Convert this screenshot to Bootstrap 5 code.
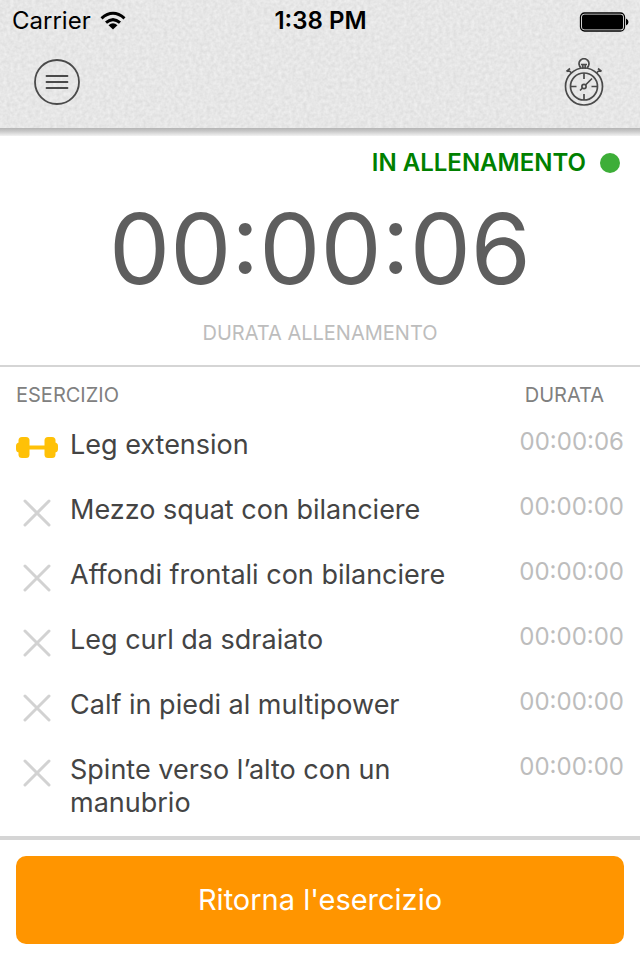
<!DOCTYPE html>
<html lang="it">
<head>
<meta charset="utf-8">
<meta name="viewport" content="width=device-width, initial-scale=1">
<title>Allenamento</title>
<link href="https://cdn.jsdelivr.net/npm/bootstrap@5.3.0/dist/css/bootstrap.min.css" rel="stylesheet">
<style>
  body { font-family: Inter, "Noto Sans", sans-serif; color: #444; background: #fff; }
  .app-header { background: #e6e6e6; padding-bottom: 20px; }
  .weave { z-index: 0; }
  .header-row { z-index: 1; }
  .header-shadow { height: 8px; background: linear-gradient(#b4b4b4, #c8c8c8 40%, #f2f2f2); }
  .status-line { height: 42px; padding: 0 11px 0 12px; font-size: 24px; color: #000; }
  .clock { font-weight: 600; }
  .tool-line { padding: 16px 34px 0; }
  .icon-btn { background: none; line-height: 0; color: #4a4a4a; }
  .live { font-size: 24px; line-height: 28px; font-weight: 600; color: #008000; padding: 13px 20px 0; gap: 14px; }
  .live-dot { width: 20px; height: 20px; background: #3dae38; }
  .timer { font-size: 97px; line-height: 120px; color: #5e5e5e; margin-top: 12px; }
  .caption { font-size: 20px; line-height: 24px; color: #bdbdbd; }
  .summary { border-bottom: 2px solid #d5d5d5; padding-bottom: 20px; }
  .exercises { font-size: 27px; line-height: 33px; color: #444; }
  .exercises th { font-size: 20px; line-height: 24px; font-weight: 400; color: #808080; padding: 16px 16px 5px; }
  .exercises th:last-child { padding-right: 36px; }
  .exercises td { padding: 16px 0; vertical-align: top; }
  .exercises .state { width: 70px; padding: 22px 0 0 16px; line-height: 0; }
  .exercises .time { width: 140px; padding-right: 16px; font-size: 24px; line-height: 28px; color: #bdbdbd; text-align: right; }
  .app-footer { border-top: 4px solid #d5d5d5; }
  .resume { background: #ff9500; color: #fff; font-size: 29px; line-height: 34px; padding: 27px 16px; border-radius: 10px; }
  .resume:hover { background: #f08c00; color: #fff; }
</style>
</head>
<body class="d-flex flex-column min-vh-100">
<header class="app-header position-relative">
  <svg class="weave position-absolute top-0 start-0 w-100 h-100" aria-hidden="true">
    <filter id="grain" x="0" y="0" width="100%" height="100%" color-interpolation-filters="sRGB">
      <feTurbulence type="fractalNoise" baseFrequency="0.28" numOctaves="2" seed="4"/>
      <feColorMatrix values="0.1 0 0 0 0.853  0.1 0 0 0 0.853  0.1 0 0 0 0.853  0 0 0 0 1"/>
    </filter>
    <rect width="100%" height="100%" filter="url(#grain)"/>
  </svg>
  <div class="header-row position-relative">
    <div class="status-line row g-0 align-items-center">
      <div class="col d-flex align-items-center gap-2">
        <span>Carrier</span>
        <svg width="28" height="20" viewBox="0 0 28 20" fill="none" stroke="#000" stroke-width="3" role="img" aria-label="Wi-Fi">
          <path d="M2.500 7.300Q14-2.800 25.500 7.300"/><path d="M7 11.700Q14 5.500 21 11.700"/>
          <path d="M14 18.500l-4.500-4.300Q14 10.400 18.500 14.200z" fill="#000" stroke="none"/>
        </svg>
      </div>
      <div class="col-auto clock">1:38 PM</div>
      <div class="col text-end lh-1">
        <svg width="50" height="20" viewBox="0 0 50 20" role="img" aria-label="Batteria carica">
          <rect x="1.500" y="1" width="44" height="18" rx="4" fill="#f5f5f5" stroke="#000" stroke-width="1.300"/>
          <rect x="3" y="2.500" width="41" height="15" rx="2.500" fill="#000"/>
          <path d="M47 6.500q2.500 1 2.500 3.500t-2.500 3.500z"/>
        </svg>
      </div>
    </div>
    <div class="tool-line d-flex justify-content-between align-items-center">
      <button type="button" class="icon-btn border-0 p-0" aria-label="Menu">
        <svg width="46" height="50" viewBox="0 0 46 50" fill="none" stroke="currentColor" stroke-width="1.800"><circle cx="23" cy="24" r="22"/><path d="M12.500 18h21M12.500 24h21M12.500 30h21" stroke-linecap="round"/></svg>
      </button>
      <button type="button" class="icon-btn border-0 p-0" aria-label="Cronometro">
        <svg width="44" height="50" viewBox="0 0 44 50" fill="none" stroke="currentColor" stroke-width="1.700">
          <circle cx="22" cy="28.500" r="18.500"/><circle cx="22" cy="28.500" r="13.500"/>
          <path d="M19 9.700a5 5 0 1 1 6 0M19 6.500h6M20.800 7v4M23.200 7v4M22 15v6M22 36v6M8.500 28.500h6M29.500 28.500h6M23.500 27l6.500-6.500M20.500 30l-2.500 2.500"/>
          <circle cx="22" cy="28.500" r="2.100"/>
          <path d="M9.500 15l-3-3M4.500 13.500l3.500-3M34.500 15l3-3M36 10.500l3.500 3"/>
        </svg>
      </button>
    </div>
  </div>
</header>
<div class="header-shadow"></div>
<main class="flex-grow-1">
  <section class="summary text-center">
    <div class="live d-flex justify-content-end align-items-center"><span>IN ALLENAMENTO</span><span class="live-dot rounded-circle"></span></div>
    <div class="timer">00:00:06</div>
    <div class="caption mt-2 pt-1">DURATA ALLENAMENTO</div>
  </section>
  <table class="exercises w-100">
    <thead><tr><th scope="col" colspan="2">ESERCIZIO</th><th scope="col" class="text-end">DURATA</th></tr></thead>
    <tbody>
      <tr><td class="state"><svg width="42" height="28" viewBox="0 0 42 28" fill="#ffc107" role="img" aria-label="In corso"><rect x="2.500" y="3" width="11" height="21" rx="3.500"/><rect x="28.500" y="3" width="11" height="21" rx="3.500"/><rect y="8.500" width="8" height="10" rx="3.500"/><rect x="34" y="8.500" width="8" height="10" rx="3.500"/><rect x="12" y="11.500" width="18" height="4"/></svg></td><td>Leg extension</td><td class="time">00:00:06</td></tr>
      <tr><td class="state"><svg width="42" height="28" viewBox="0 0 42 28" role="img" aria-label="Da fare"><use href="#cross"/></svg></td><td>Mezzo squat con bilanciere</td><td class="time">00:00:00</td></tr>
      <tr><td class="state"><svg width="42" height="28" viewBox="0 0 42 28" role="img" aria-label="Da fare"><use href="#cross"/></svg></td><td>Affondi frontali con bilanciere</td><td class="time">00:00:00</td></tr>
      <tr><td class="state"><svg width="42" height="28" viewBox="0 0 42 28" role="img" aria-label="Da fare"><use href="#cross"/></svg></td><td>Leg curl da sdraiato</td><td class="time">00:00:00</td></tr>
      <tr><td class="state"><svg width="42" height="28" viewBox="0 0 42 28" role="img" aria-label="Da fare"><use href="#cross"/></svg></td><td>Calf in piedi al multipower</td><td class="time">00:00:00</td></tr>
      <tr><td class="state"><svg width="42" height="28" viewBox="0 0 42 28" role="img" aria-label="Da fare"><use href="#cross"/></svg></td><td>Spinte verso l’alto con un manubrio</td><td class="time">00:00:00</td></tr>
    </tbody>
  </table>
</main>
<footer class="app-footer p-3">
  <button type="button" class="resume btn border-0 w-100">Ritorna l'esercizio</button>
</footer>
<svg class="position-absolute" width="0" height="0" aria-hidden="true"><defs><path id="cross" d="M9 2l24 24M33 2l-24 24" stroke="#d2d2d2" stroke-width="3" stroke-linecap="round"/></defs></svg>
<script src="https://cdn.jsdelivr.net/npm/bootstrap@5.3.0/dist/js/bootstrap.bundle.min.js"></script>
</body>
</html>
